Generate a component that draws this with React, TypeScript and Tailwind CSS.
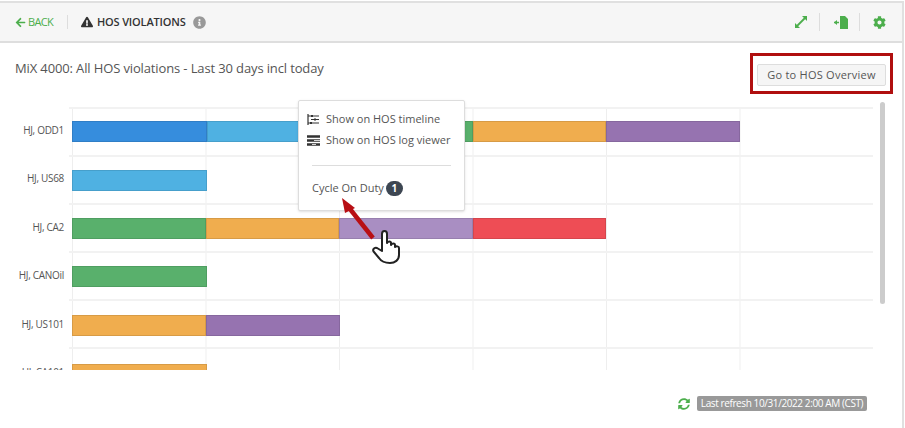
import { FaArrowLeft, FaCog, FaExclamationTriangle, FaInfoCircle, FaSyncAlt } from "react-icons/fa";

const rows = [
  { label: "HJ, ODD1", labelTop: 15, barTop: 12, bars: [["bg-[#368ddd]", 135], ["bg-[#4fb1e2]", 133], ["bg-[#59b06c]", 133], ["bg-[#f0ad4e]", 133], ["bg-[#9673b0]", 134]] },
  { label: "HJ, US68", labelTop: 15, barTop: 13, bars: [["bg-[#4fb1e2]", 135]] },
  { label: "HJ, CA2", labelTop: 16, barTop: 13, bars: [["bg-[#59b06c]", 134], ["bg-[#f0ad4e]", 133], ["bg-[#a98ec2]", 134], ["bg-[#ee4d55]", 133]] },
  { label: "HJ, CANOil", labelTop: 16, barTop: 13, bars: [["bg-[#59b06c]", 135]] },
  { label: "HJ, US101", labelTop: 17, barTop: 14, bars: [["bg-[#f0ad4e]", 134], ["bg-[#9673b0]", 134]] },
  { label: "HJ, CA101", labelTop: 17, barTop: 15, bars: [["bg-[#f0ad4e]", 135]] },
] as const;

export default function App() {
  return (
    <div className="relative h-[428px] w-[905px] overflow-hidden bg-white pt-px font-['Open_Sans',sans-serif] text-[#555]">
      <div className="h-[427px] w-[904px] border-t-2 border-r-2 border-[#e0e0e0]">
        <header className="flex h-[40px] items-center border-b-2 border-[#dedede] bg-[#f6f6f6] pl-[15px] pr-[16px]">
          <FaArrowLeft className="text-[11px] text-[#4cae4c]" />
          <span className="ml-[2px] text-[11px] tracking-[-0.7px] text-[#4cae4c]">BACK</span>
          <div className="ml-[14px] h-[14px] w-px bg-[#ddd]" />
          <FaExclamationTriangle className="ml-[13px] text-[12px] text-[#333]" />
          <span className="ml-[4px] text-[11px] font-semibold tracking-[-0.15px] text-[#333]">HOS VIOLATIONS</span>
          <FaInfoCircle className="ml-[7px] text-[13px] text-[#999]" />
          <div className="ml-auto flex items-center">
            <svg width="14" height="14" viewBox="0 0 14 14">
              <path d="M3 11 11 3" stroke="#4cae4c" strokeWidth="1.8" />
              <path d="M8 1h5v5z" fill="#4cae4c" />
              <path d="M1 8v5h5z" fill="#4cae4c" />
            </svg>
            <div className="ml-[11px] h-[18px] w-px bg-[#ddd]" />
            <svg width="14" height="13" viewBox="0 0 14 13" className="ml-[14px]">
              <path d="M6 0h5l3 3v10H6z" fill="#4cae4c" />
              <path d="M0 6.500h5" stroke="#4cae4c" strokeWidth="1.500" />
              <path d="M3 4v5L0 6.500z" fill="#4cae4c" />
            </svg>
            <div className="ml-[11px] h-[18px] w-px bg-[#ddd]" />
            <FaCog className="ml-[13px] text-[13px] text-[#4cae4c]" />
          </div>
        </header>

        <div className="flex items-start justify-between pl-[15px] pr-[9px] pt-[10px]">
          <h2 className="pt-[5px] text-[13px] leading-[20px] tracking-[-0.13px] text-[#555]">MiX 4000: All HOS violations - Last 30 days incl today</h2>
          <div className="border-[3px] border-[#b00f0f] px-[4px] py-[5px]">
            <button className="h-[22px] w-[129px] rounded-[2px] border border-[#ddd] bg-[#f5f5f5] text-[11px] tracking-[0.25px] text-[#555]">
              Go to HOS Overview
            </button>
          </div>
        </div>

        <div className="mt-[13px] flex">
          <div className="h-[263px] overflow-hidden">
            {rows.map((row) => (
              <div key={row.label} className="flex h-[48px]">
                <div className="w-[65px] pr-[1px] text-right text-[10px] leading-[16px] tracking-[-0.3px] text-[#555]" style={{ paddingTop: row.labelTop }}>
                  {row.label}
                </div>
                <div className="ml-[4px] h-full w-[804px] border-t-2 border-[#f2f2f2] pl-[3px]">
                  <div className="h-full bg-[linear-gradient(to_right,#eee_1px,transparent_1px)] bg-[size:133.5px_100%]" style={{ paddingTop: row.barTop }}>
                    <div className="flex h-[21px]">
                      {row.bars.map(([color, width], i) => (
                        <div key={i} className={`${color} border border-black/10`} style={{ width }} />
                      ))}
                    </div>
                  </div>
                </div>
              </div>
            ))}
          </div>
          <div className="ml-[7px] mt-[-5px] h-[202px] w-[5px] rounded-full bg-[#ccc]" />
        </div>

        <div className="mt-[26px] flex items-center justify-end pr-[35px]">
          <FaSyncAlt className="text-[12px] text-[#4cae4c]" />
          <span className="ml-[7px] flex h-[15px] w-[170px] items-center justify-center rounded-[2px] bg-[#999] text-[10px] tracking-[-0.4px] text-white">
            Last refresh 10/31/2022 2:00 AM (CST)
          </span>
        </div>
      </div>

      <div className="absolute left-[298px] top-[100px] h-[111px] w-[167px] rounded-[2px] border border-[#ddd] bg-white pl-[8px] pr-[13px] pt-[8px] shadow-sm">
        <div className="flex h-[21px] items-center whitespace-nowrap text-[11px]">
          <svg width="13" height="11" viewBox="0 0 13 11" className="mr-[6px]">
            <path d="M1 0v11M1 2h11M4 5.500h8M1 9h11" stroke="#333" strokeWidth="1.200" fill="none" />
            <path d="M4 1h2v2H4zM7 4.500h2v2H7zM3 8h2v2H3z" fill="#333" />
          </svg>
          Show on HOS timeline
        </div>
        <div className="flex h-[21px] items-center whitespace-nowrap text-[11px]">
          <svg width="13" height="11" viewBox="0 0 13 11" className="mr-[6px]">
            <path d="M0 1.500h13M0 5.500h13M0 9.500h13" stroke="#333" strokeWidth="2.400" fill="none" />
            <path d="M7 5.500h6M5 9.500h4" stroke="#fff" strokeWidth="0.800" />
          </svg>
          Show on HOS log viewer
        </div>
        <div className="ml-[5px] mt-[14px] h-px w-[139px] bg-[#ddd]" />
        <div className="ml-[5px] mt-[14px] flex items-center text-[11px] leading-[16px]">
          Cycle On Duty
          <span className="ml-[2px] flex h-[15px] w-[17px] items-center justify-center rounded-full bg-[#3d4652] text-[10px] font-bold text-white">1</span>
        </div>
      </div>

      <svg className="absolute left-[335px] top-[190px]" width="70" height="75" viewBox="0 0 70 75">
        <path d="M38 48 L15 19" stroke="#b80f14" strokeWidth="4.500" fill="none" />
        <path d="M7 8 L20 18 L10 23 Z" fill="#b80f14" />
        <path
          d="M47 61V44c0-4 5-4 5 0v9c1-2 4-2 4 0v2c1-2 4-2 4 0v2c1-1 4-1 4 1v7c0 5-4 8-9 8-6 0-9-2-11-5l-5-6c-2-2 0-5 3-4l5 3z"
          fill="#fff"
          stroke="#222"
          strokeWidth="2"
          strokeLinejoin="round"
        />
      </svg>
    </div>
  );
}
